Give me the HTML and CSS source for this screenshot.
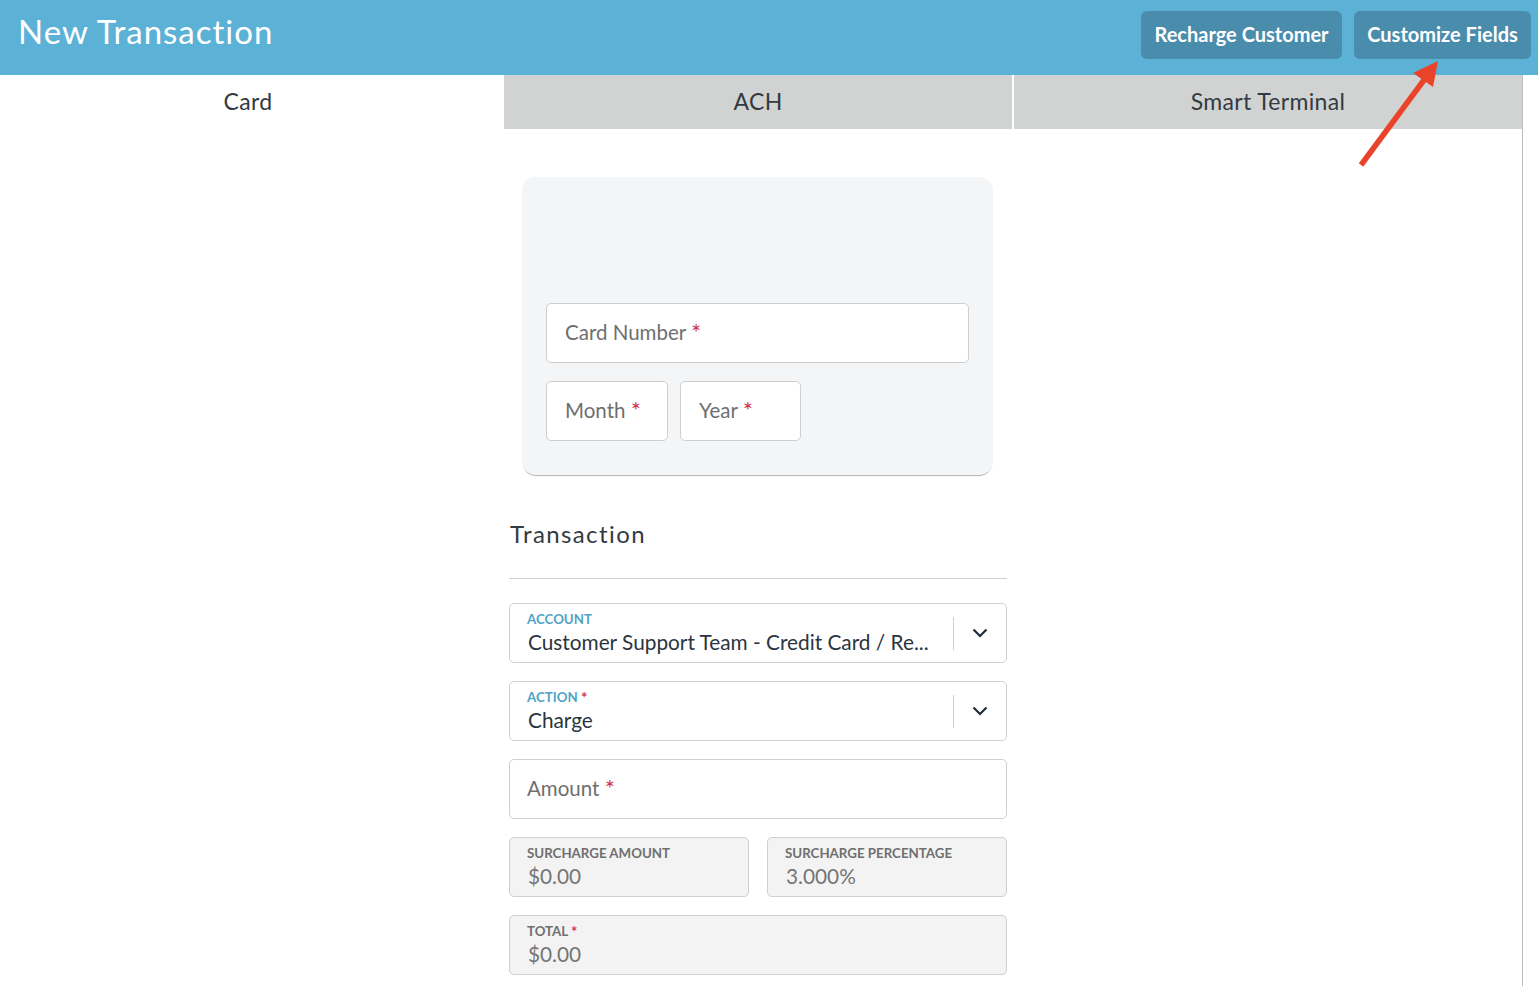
FILE: index.html
```html
<!DOCTYPE html>
<html>
<head>
  <title>New Transaction</title>
  <link rel="stylesheet" href="styles.css">
</head>
<body>
  <div class="header">
    <h1 class="title">New Transaction</h1>
    <div class="header-actions">
      <button class="header-button recharge-button">Recharge Customer</button>
      <button class="header-button customize-button">Customize Fields</button>
    </div>
  </div>

  <div class="page">
    <div class="tabs">
      <div class="tab tab-active">Card</div>
      <div class="tab">ACH</div>
      <div class="tab">Smart Terminal</div>
    </div>

    <div class="content">
      <div class="card-panel">
        <div class="field card-number"><span class="placeholder">Card Number <span class="required">*</span></span></div>
        <div class="expiry-row">
          <div class="field month"><span class="placeholder">Month <span class="required">*</span></span></div>
          <div class="field year"><span class="placeholder">Year <span class="required">*</span></span></div>
        </div>
      </div>

      <div class="transaction">
        <h2 class="section-title">Transaction</h2>
        <div class="section-rule"></div>

        <div class="form-fields">
          <div class="select">
            <div class="select-value">
              <div class="small-label accent">ACCOUNT</div>
              <div class="value">Customer Support Team - Credit Card / Re...</div>
            </div>
            <div class="select-divider"></div>
            <svg class="chevron" width="16" height="10" viewBox="0 0 16 10"><path d="M1.5 1.5l6.5 6.5 6.5-6.5" fill="none" stroke="#1f2d3a" stroke-width="2.2"/></svg>
          </div>

          <div class="select">
            <div class="select-value">
              <div class="small-label accent">ACTION <span class="required">*</span></div>
              <div class="value">Charge</div>
            </div>
            <div class="select-divider"></div>
            <svg class="chevron" width="16" height="10" viewBox="0 0 16 10"><path d="M1.5 1.5l6.5 6.5 6.5-6.5" fill="none" stroke="#1f2d3a" stroke-width="2.2"/></svg>
          </div>

          <div class="field amount"><span class="placeholder">Amount <span class="required">*</span></span></div>

          <div class="readonly-row">
            <div class="readonly">
              <div class="small-label">SURCHARGE AMOUNT</div>
              <div class="value muted">$0.00</div>
            </div>
            <div class="readonly">
              <div class="small-label">SURCHARGE PERCENTAGE</div>
              <div class="value muted">3.000%</div>
            </div>
          </div>

          <div class="readonly">
            <div class="small-label">TOTAL <span class="required">*</span></div>
            <div class="value muted">$0.00</div>
          </div>
        </div>
      </div>
    </div>
  </div>

  <svg class="arrow" width="100" height="120" viewBox="0 0 100 120">
    <path d="M3 107L66 22" stroke="#e9442a" stroke-width="5.5" fill="none"/>
    <path d="M80 3L55 15L75 29Z" fill="#e9442a"/>
  </svg>
</body>
</html>
```

FILE: styles.css
```css
html, body {
  height: 100%;
}

body {
  margin: 0;
  height: 986px;
  overflow: hidden;
  font-family: 'Lato', 'Open Sans', sans-serif;
  background: #ffffff;
  color: #2b3540;
}

.header {
  display: flex;
  align-items: center;
  justify-content: space-between;
  height: 75px;
  padding: 0 7px 0 18px;
  box-sizing: border-box;
  background: #5cb1d6;
}

.title {
  margin: 0 0 14px;
  font-size: 33px;
  font-weight: 400;
  color: #ffffff;
  letter-spacing: 1px;
}

.header-actions {
  display: flex;
  gap: 12px;
  margin-bottom: 6px;
}

.header-button {
  height: 48px;
  padding: 0 0 2px;
  border: none;
  border-radius: 6px;
  background: #4a8cab;
  color: #ffffff;
  font-family: inherit;
  font-size: 20px;
  font-weight: 700;
}

.recharge-button {
  width: 201px;
}

.customize-button {
  width: 177px;
}

.page {
  width: 1523px;
  height: 911px;
  box-sizing: border-box;
  border-right: 1px solid #bdbdbd;
}

.tabs {
  display: grid;
  grid-template-columns: 504px 508px 510px;
  height: 54px;
}

.tab {
  display: flex;
  align-items: center;
  justify-content: center;
  padding-bottom: 2px;
  box-sizing: border-box;
  background: #d1d3d2;
  font-size: 23px;
  letter-spacing: 0.35px;
  color: #333a42;
}

.tab + .tab + .tab {
  margin-left: 2px;
}

.tab-active {
  background: #ffffff;
  padding-right: 8px;
}

.content {
  display: flex;
  flex-direction: column;
  align-items: center;
  width: 1516px;
  padding-top: 48px;
}

.card-panel {
  width: 471px;
  height: 298px;
  margin-right: 1px;
  padding: 126px 24px 0;
  box-sizing: border-box;
  border-radius: 14px;
  background: #f4f5f7;
  box-shadow: 0 2px 1px -1px rgba(0, 0, 0, 0.3);
}

.field {
  display: flex;
  align-items: center;
  height: 60px;
  padding: 0 0 3px 18px;
  box-sizing: border-box;
  border: 1px solid #cfcfcf;
  border-radius: 5px;
  background: #ffffff;
}

.placeholder {
  font-size: 20.5px;
  color: #6f6f6f;
}

.required {
  position: relative;
  top: 1px;
  color: #d0324a;
  font-size: 24px;
  line-height: 1;
}

.expiry-row {
  display: flex;
  gap: 12px;
  margin-top: 18px;
}

.month {
  width: 122px;
}

.year {
  width: 121px;
}

.transaction {
  width: 498px;
}

.section-title {
  margin: 45px 0 0 1px;
  font-size: 24px;
  line-height: 28px;
  font-weight: 400;
  letter-spacing: 1.4px;
  color: #333a42;
}

.section-rule {
  margin-top: 30px;
  height: 1px;
  background: #cfcfcf;
}

.form-fields {
  display: flex;
  flex-direction: column;
  gap: 18px;
  margin-top: 24px;
}

.select, .readonly {
  height: 60px;
  box-sizing: border-box;
  border: 1px solid #cfcfcf;
  border-radius: 5px;
}

.select {
  display: flex;
  align-items: center;
  padding-left: 17px;
}

.select-value {
  flex: 1;
  min-width: 0;
}

.small-label {
  font-size: 13.3px;
  line-height: 16px;
  font-weight: 700;
  color: #6f6f6f;
}

.small-label .required {
  top: 1px;
  font-size: 15px;
}

.accent {
  color: #4fa3c7;
}

.value {
  margin: 2px 0 0 1px;
  font-size: 20.8px;
  line-height: 26px;
  color: #2b3540;
  white-space: nowrap;
}

.value.muted {
  margin-top: 2px;
  color: #757575;
}

.select-divider {
  width: 1px;
  height: 33px;
  background: #cfcfcf;
}

.chevron {
  margin: 0 18px;
}

.amount {
  padding-left: 17px;
}

.readonly-row {
  display: flex;
  gap: 18px;
}

.readonly-row .readonly {
  flex: 1;
}

.readonly {
  padding: 7px 0 0 17px;
  background: #f3f3f3;
}

.arrow {
  position: absolute;
  left: 1358px;
  top: 58px;
}
```
